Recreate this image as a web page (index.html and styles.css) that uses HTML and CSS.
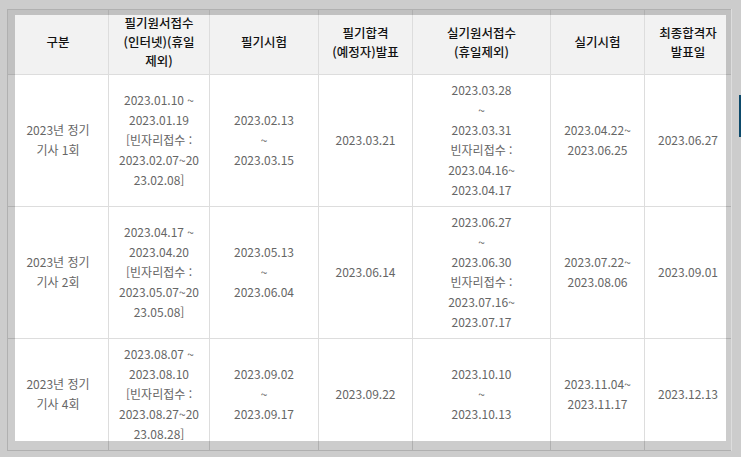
FILE: index.html
```html
<!DOCTYPE html>
<html lang="ko">
<head>
<meta charset="utf-8">
<title>2023 기사 시험 일정</title>
<link rel="stylesheet" href="styles.css">
</head>
<body>
<div class="page">
  <div class="frame">
    <table class="schedule">
      <colgroup>
        <col class="c1"><col class="c2"><col class="c3"><col class="c4"><col class="c5"><col class="c6"><col class="c7">
      </colgroup>
      <thead>
        <tr>
          <th>구분</th>
          <th>필기원서접수<br>(인터넷)(휴일<br>제외)</th>
          <th>필기시험</th>
          <th>필기합격<br>(예정자)발표</th>
          <th>실기원서접수<br>(휴일제외)</th>
          <th>실기시험</th>
          <th>최종합격자<br>발표일</th>
        </tr>
      </thead>
      <tbody>
        <tr>
          <td>2023년 정기<br>기사 1회</td>
          <td>2023.01.10 ~<br>2023.01.19<br>[빈자리접수 :<br>2023.02.07~20<br>23.02.08]</td>
          <td>2023.02.13<br>~<br>2023.03.15</td>
          <td>2023.03.21</td>
          <td>2023.03.28<br>~<br>2023.03.31<br>빈자리접수 :<br>2023.04.16~<br>2023.04.17</td>
          <td>2023.04.22~<br>2023.06.25</td>
          <td>2023.06.27</td>
        </tr>
        <tr>
          <td>2023년 정기<br>기사 2회</td>
          <td>2023.04.17 ~<br>2023.04.20<br>[빈자리접수 :<br>2023.05.07~20<br>23.05.08]</td>
          <td>2023.05.13<br>~<br>2023.06.04</td>
          <td>2023.06.14</td>
          <td>2023.06.27<br>~<br>2023.06.30<br>빈자리접수 :<br>2023.07.16~<br>2023.07.17</td>
          <td>2023.07.22~<br>2023.08.06</td>
          <td>2023.09.01</td>
        </tr>
        <tr>
          <td>2023년 정기<br>기사 4회</td>
          <td>2023.08.07 ~<br>2023.08.10<br>[빈자리접수 :<br>2023.08.27~20<br>23.08.28]</td>
          <td>2023.09.02<br>~<br>2023.09.17</td>
          <td>2023.09.22</td>
          <td>2023.10.10<br>~<br>2023.10.13</td>
          <td>2023.11.04~<br>2023.11.17</td>
          <td>2023.12.13</td>
        </tr>
      </tbody>
    </table>
  </div>
  <div class="edge-bar"></div>
</div>
</body>
</html>
```

FILE: styles.css
```css
html, body {
  margin: 0;
  padding: 0;
  background: #cccccc;
}

.page {
  display: flex;
  align-items: flex-start;
  padding: 9px 0 0 7px;
}

.frame {
  position: relative;
  width: 724px;
  flex: none;
}

.frame::after {
  content: "";
  position: absolute;
  inset: 0;
  border-style: solid;
  border-color: rgba(0, 0, 0, 0.2);
  border-width: 6px 5px 10px 8px;
  pointer-events: none;
}

.edge-bar {
  flex: none;
  width: 2px;
  height: 42px;
  margin-top: 86px;
  margin-left: 8px;
  background: #0d4a6b;
}

.schedule {
  width: 724px;
  table-layout: fixed;
  border-collapse: collapse;
  background: #ffffff;
  font-family: "Noto Sans CJK KR", "Noto Sans", sans-serif;
  font-size: 12px;
  text-align: center;
}

.c1 { width: 101px; }
.c2 { width: 101px; }
.c3 { width: 109px; }
.c4 { width: 94px; }
.c5 { width: 138px; }
.c6 { width: 94px; }
.c7 { width: 87px; }

.schedule th,
.schedule td {
  border: 1px solid #dddddd;
  white-space: nowrap;
  vertical-align: middle;
}

.schedule th {
  background: #f2f2f2;
  color: #111111;
  font-weight: 500;
  font-size: 12.5px;
  line-height: 19px;
  padding: 3px 2px 4px;
}

.schedule td {
  color: #666666;
  line-height: 20px;
  padding: 5px 4px 6px;
}
```
